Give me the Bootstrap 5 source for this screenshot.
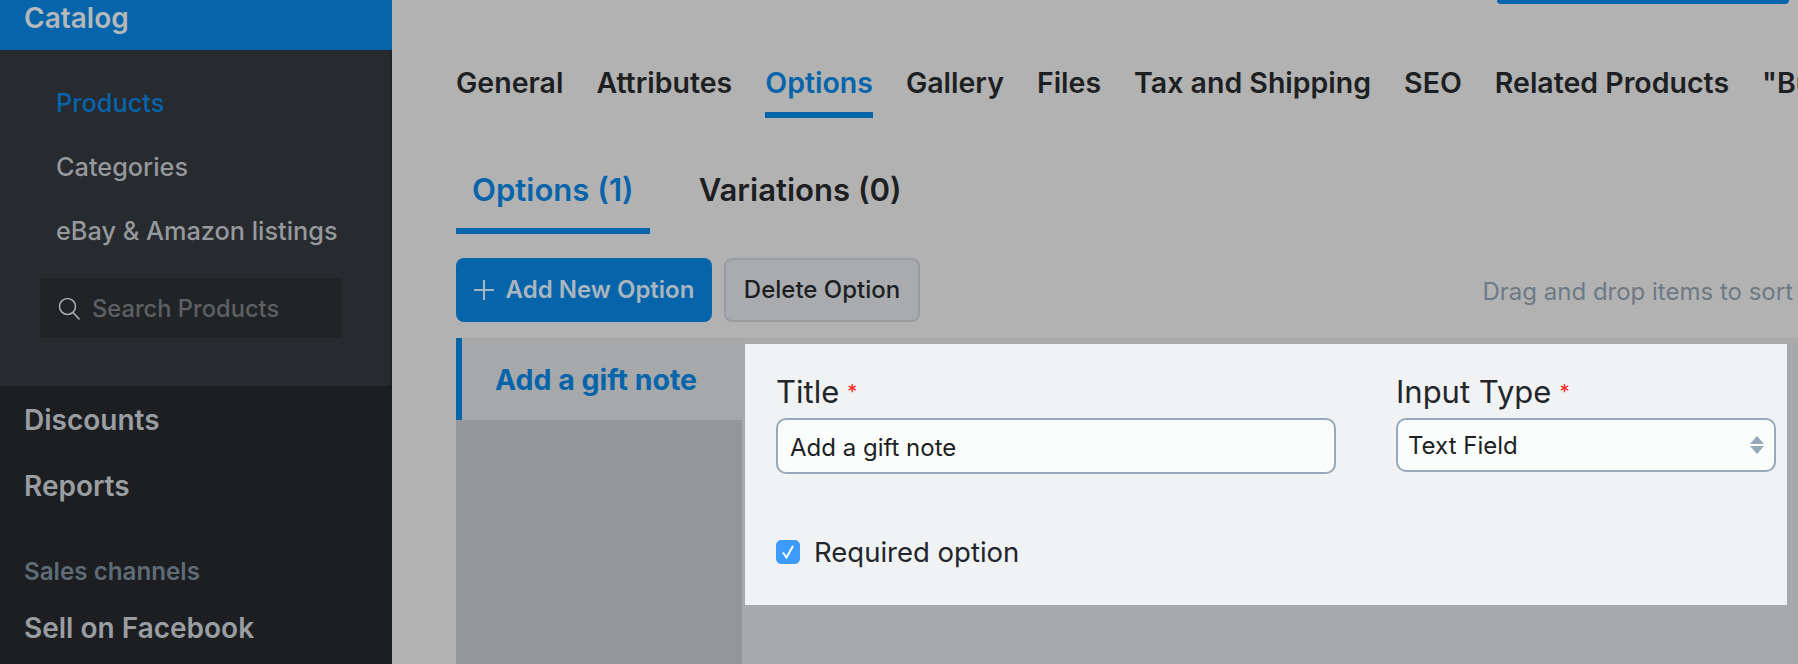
<!DOCTYPE html>
<html lang="en">
<head>
<meta charset="utf-8">
<title>Product options</title>
<link rel="stylesheet" href="https://cdn.jsdelivr.net/npm/bootstrap@5.3.0/dist/css/bootstrap.min.css">
<style>
html,body{height:664px;overflow:hidden}
body{background:#b2b2b2;font-family:Inter,"Liberation Sans",sans-serif;color:#1d1f23}
.shell{height:664px}
.side{width:392px;flex:none;background:#1c1e22;color:#9a9da1}
.side a{color:inherit;text-decoration:none}
.side-active{height:50px;background:#0664ab;padding-left:24px;font-size:28px;font-weight:600;line-height:36px;color:#b5b8ba}
.side-sub{height:336px;background:#272a2f;border-right:2px solid #1f2125;padding-top:21px}
.side-sub .sub-link{display:block;padding-left:56px;font-size:25.3px;font-weight:500;line-height:64px;color:#95989c}
.side-sub .sub-link.on{color:#0664ab}
.side-search{width:302px;height:60px;margin:15px 0 0 40px;background:#212427;padding:2px 0 0 18px;gap:12px;font-size:23.7px;font-weight:500;color:#5d6064}
.side-main{display:block;padding-left:24px;font-size:28px;font-weight:600;line-height:36px;color:#96999d}
.side-head{padding-left:24px;font-size:24.2px;font-weight:600;line-height:30px;color:#5f6b75}
.work{min-width:0;overflow:hidden}
.top-btn{width:292px;height:4px;margin-right:9px;background:#0664ab;border-radius:0 0 8px 8px}
.tabs-main{margin:46px 0 0 64px;gap:33px;white-space:nowrap;flex-wrap:nowrap}
.tabs-main a{display:block;height:68px;line-height:65px;border-bottom:6px solid transparent;font-size:28.5px;font-weight:600;color:#1d1f23;text-decoration:none}
.tabs-main a.on{color:#0664ab;border-color:#0664ab}
.tabs-sub{margin:42px 0 0 64px;gap:49px}
.tabs-sub a{display:block;height:74px;padding:0 16px;line-height:60px;border-bottom:6px solid transparent;font-size:31.1px;font-weight:600;color:#1d1f23;text-decoration:none}
.tabs-sub a.on{color:#0664ab;border-color:#0664ab}
.tabs-sub a+a{padding-left:0}
.act-row{margin:24px 0 0 64px;height:64px;gap:12px}
.btn-add{width:256px;height:64px;padding:0;border-radius:8px;font-size:24px;font-weight:600;background:#0664ab;border:0;color:#a9b5bf;gap:12px}
.btn-del{width:196px;height:64px;padding:0;border-radius:8px;font-size:24px;font-weight:500;background:#a9abae;border:2px solid #999da1;color:#1d1f23}
.drag-hint{margin-left:auto;margin-right:5px;padding-top:16px;font-size:24px;color:#6d7a86;white-space:nowrap}
.opt-area{margin:16px 0 0 64px;height:328px;background:#a8a9aa}
.opt-list{width:286px;flex:none;background:#93979a}
.opt-item{height:82px;background:#a6a8aa;border-left:6px solid #0664ab;padding-left:33px;line-height:84px;font-size:28.5px;font-weight:700;color:#0664ab}
.opt-panel{width:1042px;height:261px;margin:6px 0 0 3px;background:#f1f2f4;padding:28px 11px 0 31px}
.fld-label{display:block;font-size:31px;line-height:40px;margin:0 0 6px 0;color:#22252a}
.req{color:#f22;font-size:20px;margin-left:8px;vertical-align:top}
.opt-panel .form-control,.opt-panel .form-select{height:56px;border:2px solid #97a8b9;border-radius:10px;background-color:#fbfdfc;font-size:24px;color:#1d1f23;padding:2px 12px 0;box-shadow:none}
.opt-panel .form-select{height:54px;padding:2px 30px 0 10px;background-image:url("data:image/svg+xml,%3csvg xmlns='http://www.w3.org/2000/svg' viewBox='0 0 14 18'%3e%3cpath fill='%2397a8b9' d='M7 0l7 8H0zM7 18l7-8H0z'/%3e%3c/svg%3e");background-size:14px 18px;background-position:right 10px center}
.fld-title{width:560px;flex:none}
.fld-type{width:380px;flex:none;margin-left:60px}
.chk-row{margin-top:63px;gap:14px;font-size:27.5px;line-height:30px;color:#22252a}
.chk-row .form-check-input{width:24px;height:24px;margin:0;border-radius:5px;background-color:#3d9bfc;border-color:#3d9bfc;background-size:24px 24px;background-image:url("data:image/svg+xml,%3csvg xmlns='http://www.w3.org/2000/svg' viewBox='0 0 24 24'%3e%3cpath fill='none' stroke='%23fff' stroke-width='2' d='M7 12.5l3.5 5L17 6'/%3e%3c/svg%3e")}
</style>
</head>
<body>
<div class="shell d-flex">
  <nav class="side">
    <div class="side-active">Catalog</div>
    <div class="side-sub">
      <a class="sub-link on" href="#">Products</a>
      <a class="sub-link" href="#">Categories</a>
      <a class="sub-link" href="#">eBay &amp; Amazon listings</a>
      <div class="side-search d-flex align-items-center">
        <svg width="22" height="24" viewBox="0 0 22 24" fill="none" stroke="#a8abae" stroke-width="1.6"><circle cx="9.5" cy="9.5" r="8"/><path d="M15 15.5l6.5 7"/></svg>
        <span>Search Products</span>
      </div>
    </div>
    <a class="side-main mt-3" href="#">Discounts</a>
    <a class="side-main" style="margin-top:30px" href="#">Reports</a>
    <div class="side-head" style="margin-top:53px">Sales channels</div>
    <a class="side-main" style="margin-top:23px" href="#">Sell on Facebook</a>
  </nav>
  <main class="work flex-grow-1">
    <div class="d-flex justify-content-end"><div class="top-btn"></div></div>
    <div class="tabs-main nav">
      <a href="#">General</a><a href="#">Attributes</a><a class="on" href="#">Options</a><a href="#">Gallery</a><a href="#">Files</a><a href="#">Tax and Shipping</a><a href="#">SEO</a><a href="#">Related Products</a><a href="#">"Buy Now" Button</a>
    </div>
    <div class="tabs-sub nav">
      <a class="on" href="#">Options (1)</a><a href="#">Variations (0)</a>
    </div>
    <div class="act-row d-flex">
      <button type="button" class="btn btn-add d-flex align-items-center justify-content-center">
        <svg width="20" height="20" viewBox="0 0 20 20" stroke="#a9b5bf" stroke-width="2"><path d="M10 0v20M0 10h20"/></svg>
        <span>Add New Option</span>
      </button>
      <button type="button" class="btn btn-del">Delete Option</button>
      <span class="drag-hint">Drag and drop items to sort</span>
    </div>
    <div class="opt-area d-flex">
      <div class="opt-list">
        <div class="opt-item">Add a gift note</div>
      </div>
      <form class="opt-panel">
        <div class="d-flex">
          <div class="fld-title">
            <label class="fld-label" for="t">Title<span class="req">*</span></label>
            <input id="t" class="form-control" type="text" value="Add a gift note">
          </div>
          <div class="fld-type">
            <label class="fld-label" for="y">Input Type<span class="req">*</span></label>
            <select id="y" class="form-select"><option>Text Field</option></select>
          </div>
        </div>
        <label class="chk-row d-flex align-items-center">
          <input class="form-check-input" type="checkbox" checked>
          <span>Required option</span>
        </label>
      </form>
    </div>
  </main>
</div>
</body>
</html>
